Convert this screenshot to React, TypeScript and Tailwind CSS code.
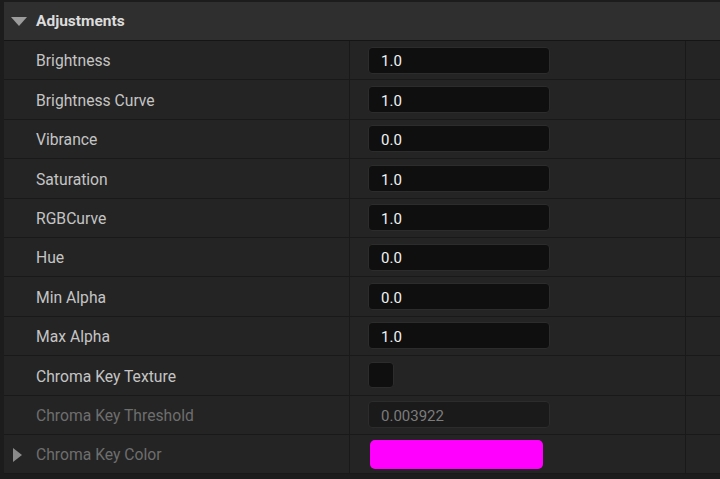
type Row = {
  label: string;
  kind: "num" | "check" | "color";
  value?: string;
  disabled?: boolean;
  expandable?: boolean;
};

const rows: Row[] = [
  { label: "Brightness", kind: "num", value: "1.0" },
  { label: "Brightness Curve", kind: "num", value: "1.0" },
  { label: "Vibrance", kind: "num", value: "0.0" },
  { label: "Saturation", kind: "num", value: "1.0" },
  { label: "RGBCurve", kind: "num", value: "1.0" },
  { label: "Hue", kind: "num", value: "0.0" },
  { label: "Min Alpha", kind: "num", value: "0.0" },
  { label: "Max Alpha", kind: "num", value: "1.0" },
  { label: "Chroma Key Texture", kind: "check" },
  { label: "Chroma Key Threshold", kind: "num", value: "0.003922", disabled: true },
  { label: "Chroma Key Color", kind: "color", disabled: true, expandable: true },
];

function Value({ row }: { row: Row }) {
  if (row.kind === "check") {
    return <div className="ml-[18px] h-[26px] w-[26px] rounded-[4px] border border-[#2c2c2c] bg-[#0f0f0f]" />;
  }
  if (row.kind === "color") {
    return <div className="ml-[20px] h-[29px] w-[173px] rounded-[5px] bg-[#ff00ff]" />;
  }
  return (
    <div
      className={
        "ml-[18px] flex h-[27px] w-[182px] items-center rounded-[4px] border border-[#2c2c2c] pl-[12px] pt-[3px] text-[15px] " +
        (row.disabled ? "bg-[#1a1a1a] text-[#7c7c7c]" : "bg-[#0f0f0f] text-[#f2f2f2]")
      }
    >
      {row.value}
    </div>
  );
}

export default function App() {
  return (
    <div
      className="flex h-[479px] w-[720px] flex-col overflow-hidden bg-[#1c1c1c] pt-[2px] pl-[4px]"
      style={{ fontFamily: "Roboto, 'Liberation Sans', sans-serif" }}
    >
      {/* category header */}
      <div className="flex h-[38px] shrink-0 items-center bg-[#2f2f2f]">
        <svg width="16" height="9" viewBox="0 0 16 9" className="ml-[7px]">
          <path d="M0 0 L16 0 L8 9 Z" fill="#9c9c9c" />
        </svg>
        <span className="ml-[9px] mt-[2px] text-[15.5px] font-bold text-[#dcdcdc]">Adjustments</span>
      </div>
      <div className="h-px shrink-0 bg-[#151515]" />

      {rows.map((row) => (
        <div key={row.label} className="flex h-[39.4px] shrink-0 border-b border-[#191919] bg-[#242424]">
          <div className="flex w-[345px] items-center">
            <div className="w-[32px]">
              {row.expandable && (
                <svg width="9" height="14" viewBox="0 0 9 14" className="ml-[9px] mt-[1px]">
                  <path d="M0 0 L9 7 L0 14 Z" fill="#8a8a8a" />
                </svg>
              )}
            </div>
            <span className={"mt-[2px] text-[15.7px] " + (row.disabled ? "text-[#6e6e6e]" : "text-[#c4c4c4]")}>
              {row.label}
            </span>
          </div>
          <div className="w-px bg-[#191919]" />
          <div className="flex w-[335px] items-center">
            <Value row={row} />
          </div>
          <div className="w-px bg-[#191919]" />
          <div className="flex-1" />
        </div>
      ))}
    </div>
  );
}
